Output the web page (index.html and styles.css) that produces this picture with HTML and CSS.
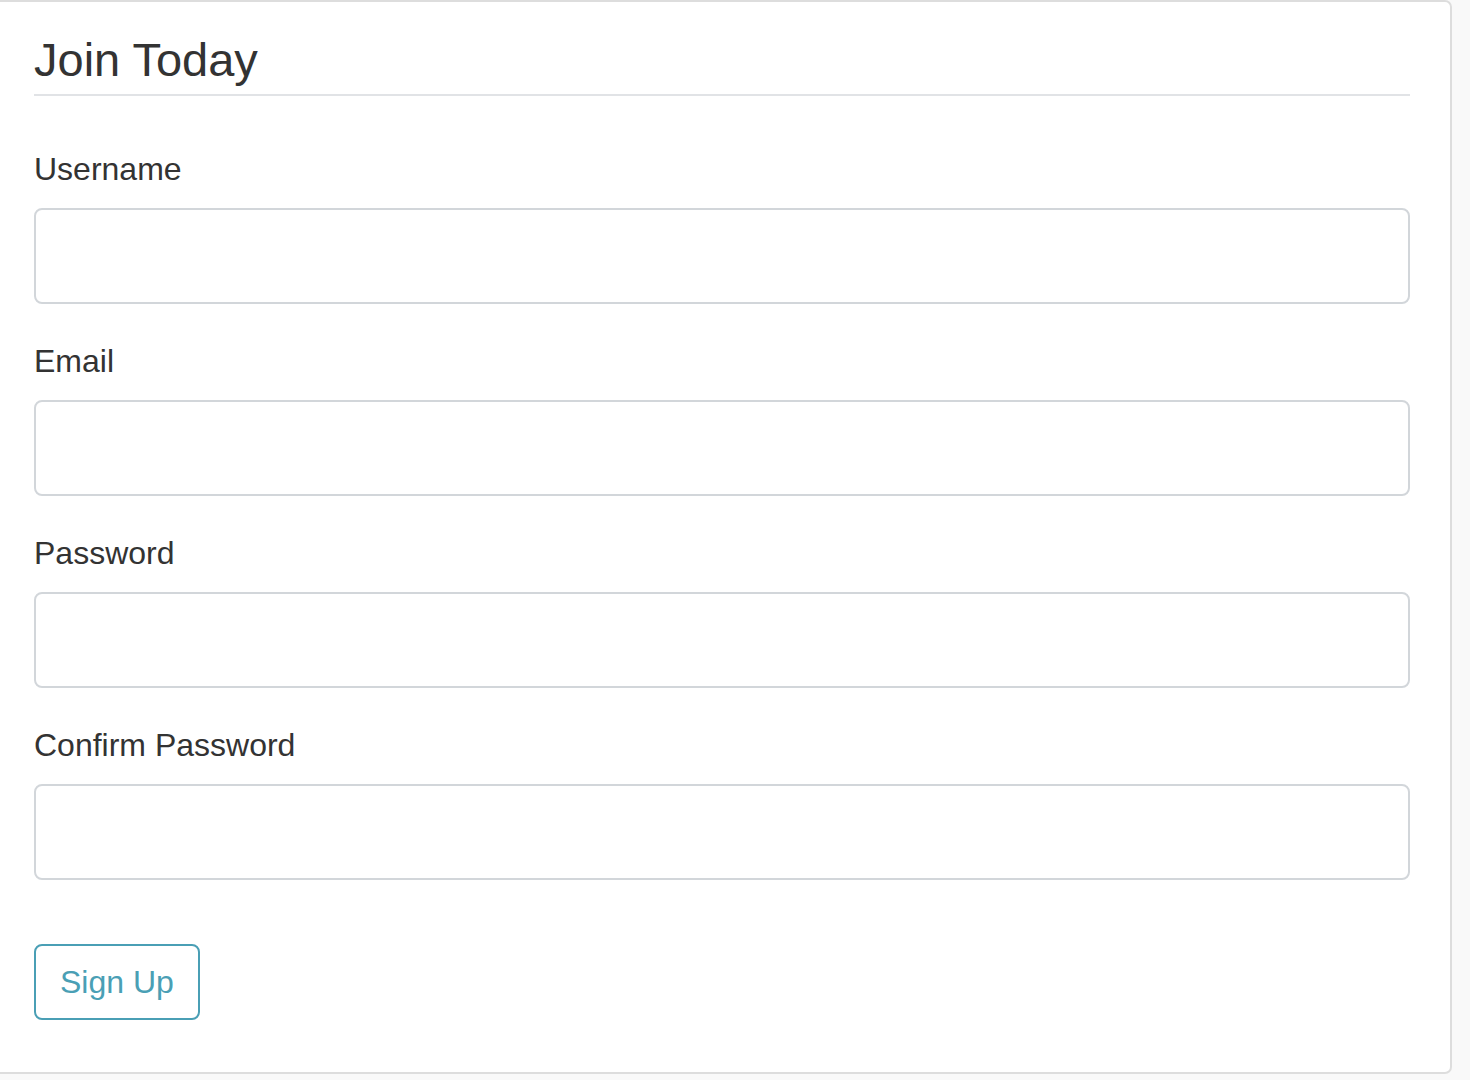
FILE: index.html
```html
<!DOCTYPE html>
<html lang="en">
<head>
<meta charset="utf-8">
<title>Join Today</title>
<link rel="stylesheet" href="styles.css">
</head>
<body>
<div class="card">
  <form class="form">
    <fieldset class="fieldset">
      <legend class="legend">Join Today</legend>
      <div class="group">
        <label class="label" for="username">Username</label>
        <input class="input" id="username" type="text">
      </div>
      <div class="group">
        <label class="label" for="email">Email</label>
        <input class="input" id="email" type="email">
      </div>
      <div class="group">
        <label class="label" for="password">Password</label>
        <input class="input" id="password" type="password">
      </div>
      <div class="group">
        <label class="label" for="confirm">Confirm Password</label>
        <input class="input" id="confirm" type="password">
      </div>
    </fieldset>
    <div class="actions">
      <button class="btn" type="button">Sign Up</button>
    </div>
  </form>
</div>
</body>
</html>
```

FILE: styles.css
```css
html, body {
  margin: 0;
  padding: 0;
}
body {
  background: #f9f9f9;
  font-family: "Liberation Sans", Arial, Helvetica, sans-serif;
  color: #333;
}
.card {
  box-sizing: border-box;
  margin-left: -10px;
  width: 1462px;
  height: 1074px;
  background: #fff;
  border: 2px solid #dddddd;
  border-radius: 7px;
  padding: 30px 40px 0 42px;
}
.form {
  margin: 0;
}
.fieldset {
  border: 0;
  margin: 0;
  padding: 0;
  min-width: 0;
}
.legend {
  display: block;
  box-sizing: border-box;
  width: 100%;
  padding: 0 0 7px 0;
  margin: 0 0 49px 0;
  font-size: 47px;
  line-height: 55px;
  font-weight: 400;
  color: #333;
  border-bottom: 2px solid #e1e3e6;
}
.group {
  display: flex;
  flex-direction: column;
  margin-bottom: 33px;
}
.label {
  font-size: 32px;
  line-height: 48px;
  color: #333;
  margin-bottom: 15px;
}
.input {
  box-sizing: border-box;
  width: 100%;
  height: 96px;
  border: 2px solid #d2d6da;
  border-radius: 8px;
  background: #fff;
  padding: 0 20px;
  font-size: 32px;
  font-family: inherit;
  outline: none;
}
.actions {
  padding-top: 31px;
}
.btn {
  box-sizing: border-box;
  height: 76px;
  padding: 0 24px;
  font-family: inherit;
  font-size: 32px;
  line-height: 48px;
  color: #4a9fb5;
  background: #fff;
  border: 2px solid #4a9fb5;
  border-radius: 8px;
  cursor: pointer;
}
```
